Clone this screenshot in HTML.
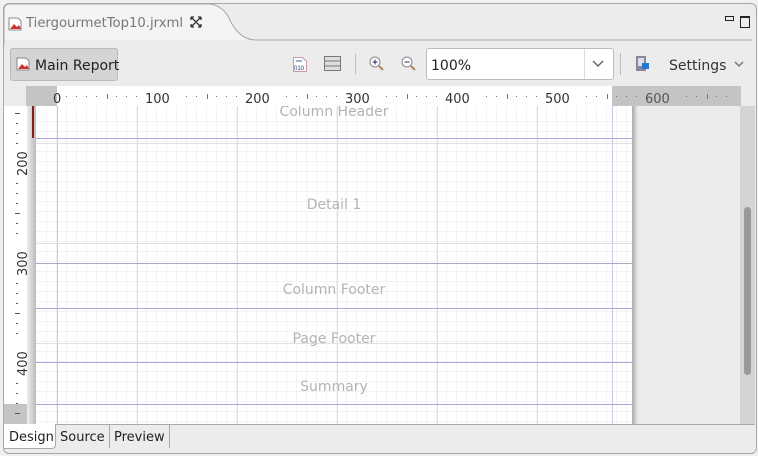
<!DOCTYPE html><html><head><style>
body{margin:0;width:758px;height:456px;background:#f0f0f0;font-family:"DejaVu Sans","Liberation Sans",sans-serif;position:relative;overflow:hidden}
.a{position:absolute}
.frame{left:3px;top:3px;width:752px;height:449px;border:1px solid #a8a8a8;border-radius:6px;background:#ececec}
.grid{left:36px;top:106px;width:596px;height:318px;background-color:#fff;
background-image:repeating-linear-gradient(90deg,transparent 0 9px,#f2f3f5 9px 10px),repeating-linear-gradient(0deg,transparent 0 9px,#f2f3f5 9px 10px);background-position:1px 0,0 7px;overflow:hidden}
.vl{position:absolute;top:0;width:1px;height:318px;background:#e0e0e0}
.hl{position:absolute;left:0;width:596px;height:1px;background:#e0e0e0}
.pl{position:absolute;left:0;width:596px;height:1px;background:#aaa8d8}
.lab{position:absolute;width:596px;text-align:center;color:#b4b4b4;font-size:14px}
.rt{position:absolute;top:92px;font-size:13px;color:#333}
</style></head><body>
<div class="a frame"></div>
<svg class="a" style="left:0;top:0" width="758" height="50"><path d="M4.5 10 Q4.5 4.5 10 4.5 H208 Q220 4.5 228 16 Q238 40 256 40 H4.5Z" fill="#f4f4f4"/><path d="M4 44 V10 Q4 4 10 4 H208 Q220 4 228 16 Q238 40 256 40 H752" fill="none" stroke="#a8a8a8"/></svg>
<svg class="a" style="left:8px;top:17px" width="14" height="14"><path d="M1 1h9l3 3v9H1z" fill="#fff" stroke="#888"/><path d="M2 12l4-5 3 3 2-2 2 4z" fill="#c33"/></svg>
<div class="a" style="left:26px;top:16px;font-size:13.2px;color:#777">TiergourmetTop10.jrxml</div>
<svg class="a" style="left:190px;top:16px" width="12" height="12"><path d="M1 1l10 10M11 1L1 11M1 1h3M1 1v3M11 1h-3M11 1v3M1 11h3M1 11v-3M11 11h-3M11 11v-3" stroke="#333" stroke-width="1.3" fill="none"/></svg>
<div class="a" style="left:725px;top:16px;width:7px;height:3px;border:1px solid #222"></div>
<div class="a" style="left:740px;top:16px;width:8px;height:9px;border:1px solid #222;border-top-width:2px"></div>
<div class="a" style="left:10px;top:48px;width:106px;height:31px;background:#d4d4d4;border:1px solid #bbb;border-radius:3px"></div>
<svg class="a" style="left:16px;top:57px" width="14" height="14"><path d="M1 1h9l3 3v9H1z" fill="#fff" stroke="#888"/><path d="M2 12l4-5 3 3 2-2 2 4z" fill="#c33"/></svg>
<div class="a" style="left:35px;top:58px;font-size:14px;color:#222">Main Report</div>
<svg class="a" style="left:293px;top:57px" width="14" height="15"><path d="M0.5 0.5h9l4 4v10h-13z" fill="#fff" stroke="#c9a"/><path d="M3 4h6" stroke="#46a"/><text x="1" y="13" font-size="6" fill="#236" font-family="Liberation Sans">010</text></svg>
<svg class="a" style="left:324px;top:56px" width="17" height="15"><rect x="0.5" y="0.5" width="16" height="14" fill="#ddd" stroke="#777"/><path d="M1 5h15M1 10h15" stroke="#777"/></svg>
<div class="a" style="left:355px;top:54px;width:1px;height:20px;background:#bbb"></div>
<svg class="a" style="left:369px;top:56px" width="15" height="15"><circle cx="6" cy="6" r="5" fill="#fff" stroke="#888"/><path d="M3.5 6h5M6 3.5v5" stroke="#236"/><path d="M10 10l4 4" stroke="#a86" stroke-width="2"/></svg>
<svg class="a" style="left:401px;top:56px" width="15" height="15"><circle cx="6" cy="6" r="5" fill="#fff" stroke="#888"/><path d="M3.5 6h5" stroke="#236"/><path d="M10 10l4 4" stroke="#a86" stroke-width="2"/></svg>
<div class="a" style="left:426px;top:48px;width:186px;height:30px;background:#fff;border:1px solid #bbb;border-radius:3px"></div>
<div class="a" style="left:584px;top:49px;width:1px;height:30px;background:#ddd"></div>
<div class="a" style="left:431px;top:58px;font-size:14px;color:#222">100%</div>
<svg class="a" style="left:592px;top:60px" width="12" height="8"><path d="M1 1l5 5 5-5" fill="none" stroke="#666" stroke-width="1.5"/></svg>
<div class="a" style="left:620px;top:53px;width:1px;height:22px;background:#bbb"></div>
<svg class="a" style="left:634px;top:55px" width="16" height="17"><rect x="2" y="1" width="10" height="15" fill="#889" /><rect x="4" y="3" width="6" height="8" fill="#dde"/><rect x="8" y="8" width="7" height="6" fill="#27c"/></svg>
<div class="a" style="left:669px;top:58px;font-size:14px;color:#333">Settings</div>
<svg class="a" style="left:734px;top:61px" width="10" height="7"><path d="M1 1l4 4 4-4" fill="none" stroke="#777" stroke-width="1.5"/></svg>
<div class="a" style="left:26px;top:86px;width:715px;height:20px;background:#fff"></div>
<div class="a" style="left:26px;top:86px;width:31px;height:20px;background:#c4c4c4"></div>
<div class="a" style="left:612px;top:86px;width:129px;height:20px;background:#c4c4c4"></div>
<svg class="a" style="left:0;top:86px" width="758" height="20">
<g fill="#777">
<rect x="66" y="10" width="1" height="1"/><rect x="76" y="10" width="1" height="1"/><rect x="86" y="10" width="1" height="1"/><rect x="96" y="10" width="1" height="1"/><rect x="116" y="10" width="1" height="1"/><rect x="126" y="10" width="1" height="1"/><rect x="136" y="10" width="1" height="1"/>
<rect x="186" y="10" width="1" height="1"/><rect x="196" y="10" width="1" height="1"/><rect x="216" y="10" width="1" height="1"/><rect x="226" y="10" width="1" height="1"/><rect x="236" y="10" width="1" height="1"/>
<rect x="286" y="10" width="1" height="1"/><rect x="296" y="10" width="1" height="1"/><rect x="316" y="10" width="1" height="1"/><rect x="326" y="10" width="1" height="1"/><rect x="336" y="10" width="1" height="1"/>
<rect x="386" y="10" width="1" height="1"/><rect x="396" y="10" width="1" height="1"/><rect x="416" y="10" width="1" height="1"/><rect x="426" y="10" width="1" height="1"/><rect x="436" y="10" width="1" height="1"/>
<rect x="486" y="10" width="1" height="1"/><rect x="496" y="10" width="1" height="1"/><rect x="516" y="10" width="1" height="1"/><rect x="526" y="10" width="1" height="1"/><rect x="536" y="10" width="1" height="1"/>
<rect x="586" y="10" width="1" height="1"/><rect x="596" y="10" width="1" height="1"/><rect x="616" y="10" width="1" height="1"/><rect x="626" y="10" width="1" height="1"/><rect x="636" y="10" width="1" height="1"/>
<rect x="686" y="10" width="1" height="1"/><rect x="696" y="10" width="1" height="1"/><rect x="716" y="10" width="1" height="1"/><rect x="726" y="10" width="1" height="1"/>
<rect x="107" y="8" width="1" height="5"/><rect x="207" y="8" width="1" height="5"/><rect x="307" y="8" width="1" height="5"/><rect x="407" y="8" width="1" height="5"/><rect x="507" y="8" width="1" height="5"/><rect x="607" y="8" width="1" height="5"/><rect x="707" y="8" width="1" height="5"/>
</g></svg>
<div class="rt" style="left:53px">0</div>
<div class="rt" style="left:145px">100</div>
<div class="rt" style="left:245px">200</div>
<div class="rt" style="left:345px">300</div>
<div class="rt" style="left:445px">400</div>
<div class="rt" style="left:545px">500</div>
<div class="rt" style="left:645px;color:#555">600</div>
<div class="a" style="left:4px;top:106px;width:26px;height:318px;background:#fff"></div>
<div class="a" style="left:4px;top:404px;width:23px;height:20px;background:#c4c4c4"></div>
<div class="a" style="left:27px;top:106px;width:9px;height:318px;background:linear-gradient(90deg,#eee,#bbb)"></div>
<div class="a" style="left:32px;top:106px;width:2px;height:32px;background:#8b1a1a"></div>
<svg class="a" style="left:4px;top:106px" width="26" height="318"><g fill="#555">
<rect x="11" y="7" width="5" height="1"/><rect x="12" y="27" width="2" height="1"/><rect x="12" y="17" width="2" height="1"/><rect x="12" y="37" width="2" height="1"/>
<rect x="12" y="77" width="2" height="1"/><rect x="12" y="87" width="2" height="1"/><rect x="11" y="107" width="5" height="1"/><rect x="12" y="97" width="2" height="1"/><rect x="12" y="117" width="2" height="1"/><rect x="12" y="127" width="2" height="1"/>
<rect x="12" y="177" width="2" height="1"/><rect x="12" y="187" width="2" height="1"/><rect x="11" y="207" width="5" height="1"/><rect x="12" y="197" width="2" height="1"/><rect x="12" y="217" width="2" height="1"/><rect x="12" y="227" width="2" height="1"/>
<rect x="12" y="277" width="2" height="1"/><rect x="12" y="287" width="2" height="1"/><rect x="11" y="307" width="5" height="1"/><rect x="12" y="297" width="2" height="1"/>
</g>
<g font-size="13" fill="#333" font-family="DejaVu Sans">
<text transform="translate(23,70) rotate(-90)">200</text>
<text transform="translate(23,170) rotate(-90)">300</text>
<text transform="translate(23,270) rotate(-90)">400</text></g></svg>
<div class="a grid">
<div class="vl" style="left:21px;background:#c8c8e0"></div>
<div class="vl" style="left:101px"></div><div class="vl" style="left:201px"></div><div class="vl" style="left:301px"></div><div class="vl" style="left:401px"></div><div class="vl" style="left:501px"></div>
<div class="vl" style="left:576px;background:#c8c8e8"></div>
<div class="hl" style="top:37px"></div><div class="hl" style="top:137px"></div><div class="hl" style="top:237px"></div>
<div class="pl" style="top:32px"></div><div class="pl" style="top:157px;background:#a8a8c0"></div><div class="pl" style="top:202px"></div><div class="pl" style="top:256px"></div><div class="pl" style="top:298px"></div>
<div class="lab" style="top:-2px">Column Header</div>
<div class="lab" style="top:91px">Detail 1</div>
<div class="lab" style="top:176px">Column Footer</div>
<div class="lab" style="top:225px">Page Footer</div>
<div class="lab" style="top:273px">Summary</div>
</div>
<div class="a" style="left:632px;top:106px;width:108px;height:318px;background:#ebebeb"></div>
<div class="a" style="left:632px;top:106px;width:6px;height:318px;background:linear-gradient(90deg,#aaa,#ebebeb)"></div>
<div class="a" style="left:740px;top:106px;width:15px;height:318px;background:#d4d4d4"></div>
<div class="a" style="left:744px;top:207px;width:7px;height:168px;background:#999;border-radius:4px"></div>
<div class="a" style="left:4px;top:424px;width:751px;height:1px;background:#aaa"></div>
<div class="a" style="left:4px;top:424px;width:51px;height:24px;background:#fff;border-right:1px solid #aaa;border-bottom:1px solid #aaa;border-radius:0 0 4px 0"></div>
<div class="a" style="left:9px;top:430px;font-size:13px;color:#222">Design</div>
<div class="a" style="left:60px;top:430px;font-size:13px;color:#222">Source</div>
<div class="a" style="left:109px;top:425px;width:1px;height:23px;background:#aaa"></div>
<div class="a" style="left:114px;top:430px;font-size:13px;color:#222">Preview</div>
<div class="a" style="left:169px;top:425px;width:1px;height:23px;background:#aaa"></div>
</body></html>
